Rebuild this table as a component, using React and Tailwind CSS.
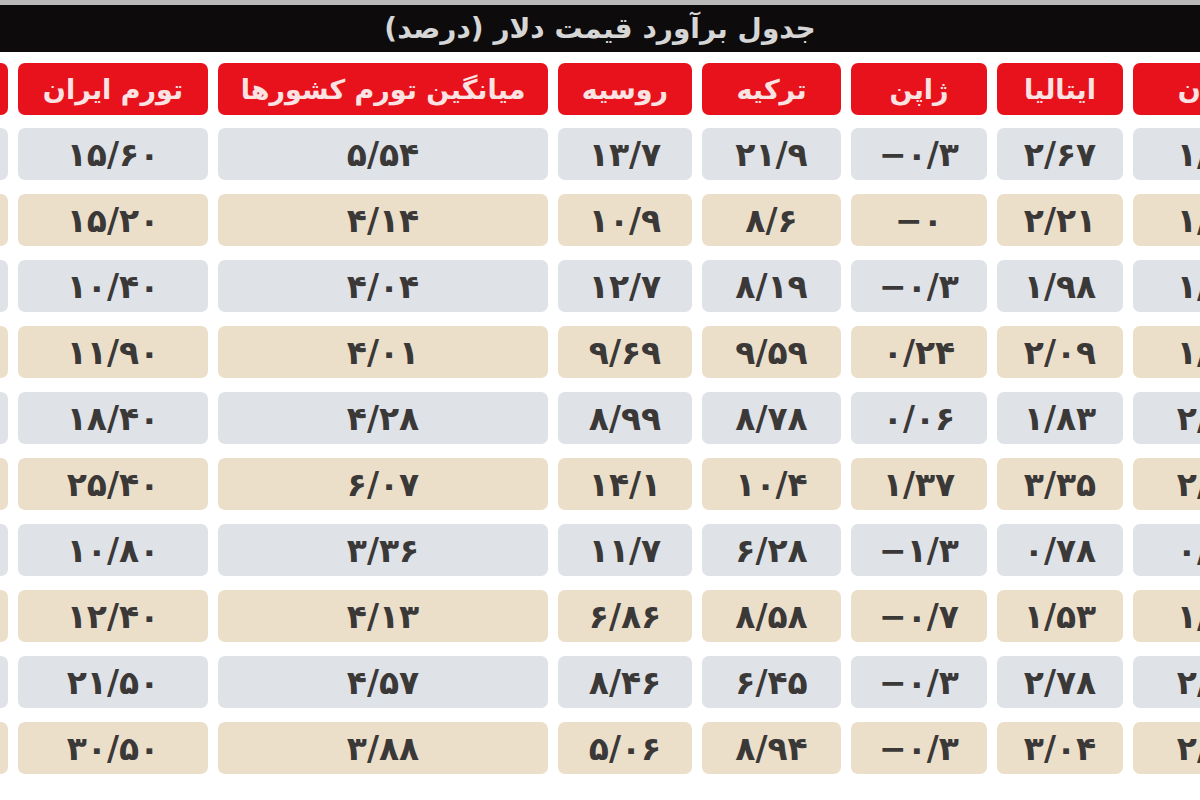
import React from "react";

const rows = [
  ["۱۵/۶۰", "۵/۵۴", "۱۳/۷", "۲۱/۹", "−۰/۳", "۲/۶۷", "۱/۴۵"],
  ["۱۵/۲۰", "۴/۱۴", "۱۰/۹", "۸/۶", "−۰", "۲/۲۱", "۱/۶۱"],
  ["۱۰/۴۰", "۴/۰۴", "۱۲/۷", "۸/۱۹", "−۰/۳", "۱/۹۸", "۱/۷۳"],
  ["۱۱/۹۰", "۴/۰۱", "۹/۶۹", "۹/۵۹", "۰/۲۴", "۲/۰۹", "۱/۵۲"],
  ["۱۸/۴۰", "۴/۲۸", "۸/۹۹", "۸/۷۸", "۰/۰۶", "۱/۸۳", "۲/۳۲"],
  ["۲۵/۴۰", "۶/۰۷", "۱۴/۱", "۱۰/۴", "۱/۳۷", "۳/۳۵", "۲/۶۳"],
  ["۱۰/۸۰", "۳/۳۶", "۱۱/۷", "۶/۲۸", "−۱/۳", "۰/۷۸", "۰/۳۱"],
  ["۱۲/۴۰", "۴/۱۳", "۶/۸۶", "۸/۵۸", "−۰/۷", "۱/۵۳", "۱/۱۰"],
  ["۲۱/۵۰", "۴/۵۷", "۸/۴۶", "۶/۴۵", "−۰/۳", "۲/۷۸", "۲/۲۰"],
  ["۳۰/۵۰", "۳/۸۸", "۵/۰۶", "۸/۹۴", "−۰/۳", "۳/۰۴", "۲/۰۱"],
];

const headers = [
  "تورم ایران",
  "میانگین تورم کشورها",
  "روسیه",
  "ترکیه",
  "ژاپن",
  "ایتالیا",
  "آلمان",
];

const widths = ["w-[190px]", "w-[330px]", "w-[134px]", "w-[139px]", "w-[136px]", "w-[126px]", "w-[160px]"];

const font = { fontFamily: '"DejaVu Sans", "Noto Sans", sans-serif' };

export default function App() {
  return (
    <div className="w-[1200px] h-[800px] bg-white overflow-hidden" style={font}>
      <div className="h-[5px] bg-[#b9b9b9]" />
      <div className="h-[47px] bg-[#0d0b0b] flex items-center justify-center">
        <span dir="rtl" className="text-[#d6d6d6] text-[28px] font-bold tracking-[1px] leading-none">
          جدول برآورد قیمت دلار (درصد)
        </span>
      </div>
      <div className="pt-[11px] flex flex-col gap-[14px]">
        <div className="flex gap-[10px] ml-[-172px] mb-[-1px]">
          <div className="w-[180px] shrink-0 h-[52px] rounded-[7px] bg-[#e8121c]" />
          {headers.map((h, i) => (
            <div
              key={i}
              className={`${widths[i]} shrink-0 h-[52px] rounded-[7px] bg-[#e8121c] flex items-center justify-center`}
            >
              <span dir="rtl" className="text-[#fbe3e3] text-[27px] font-bold tracking-[1px] leading-none">
                {h}
              </span>
            </div>
          ))}
        </div>
        {rows.map((r, ri) => {
          const bg = ri % 2 === 0 ? "bg-[#dfe2e6]" : "bg-[#ecdfca]";
          return (
            <div key={ri} className="flex gap-[10px] ml-[-172px]">
              <div className={`w-[180px] shrink-0 h-[52px] rounded-[7px] ${bg}`} />
              {r.map((v, ci) => (
                <div
                  key={ci}
                  className={`${widths[ci]} shrink-0 h-[52px] rounded-[7px] ${bg} flex items-center justify-center`}
                >
                  <span dir="ltr" className="text-[#3b3838] text-[33px] font-bold leading-none tracking-[3px]">
                    {v}
                  </span>
                </div>
              ))}
            </div>
          );
        })}
      </div>
    </div>
  );
}
